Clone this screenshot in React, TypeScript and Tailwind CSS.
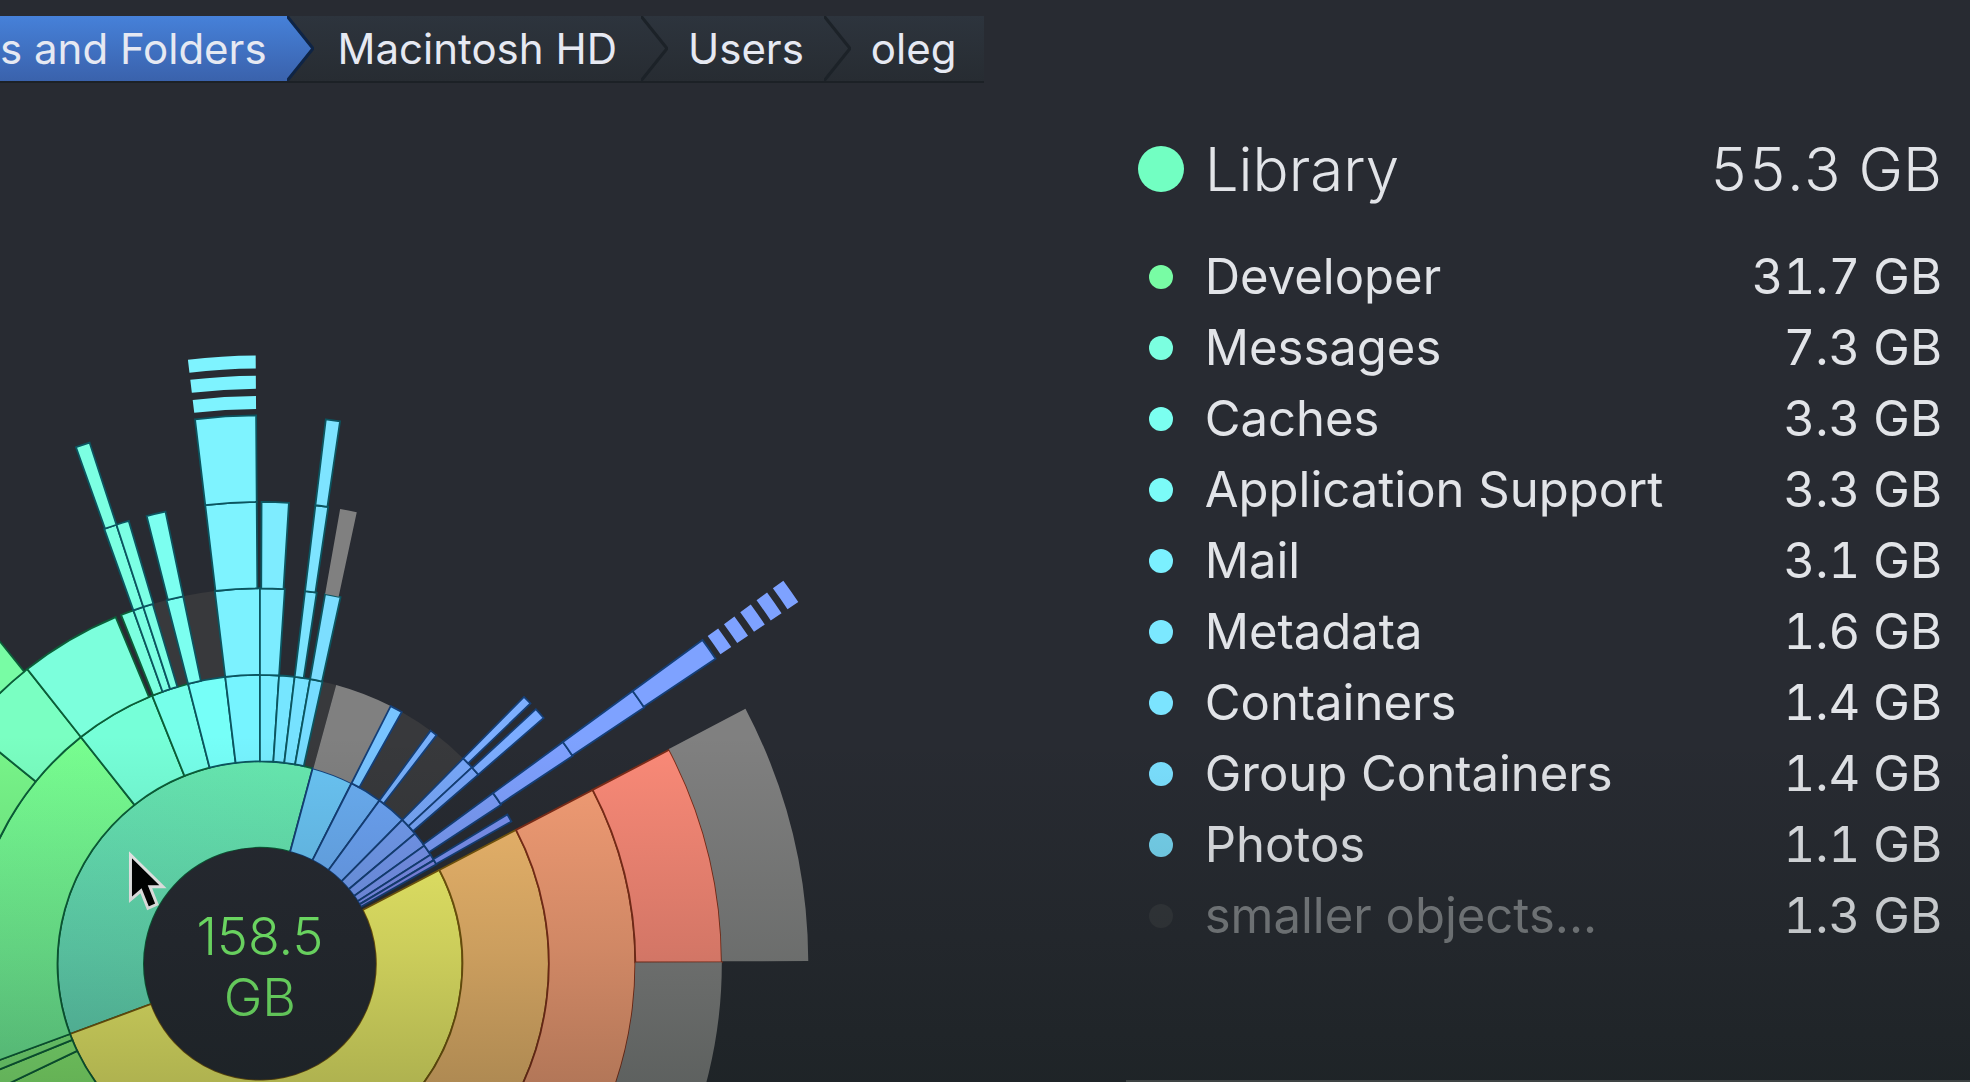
import React, { useState } from 'react';
import clsx from 'clsx';

type Seg = {
  ring: number;
  from: number;
  to: number;
  fill: string;
};

const CRUMBS = [
  { label: 's and Folders', pad: 'pr-5' },
  { label: 'Macintosh HD', pad: 'px-6' },
  { label: 'Users', pad: 'px-5' },
  { label: 'oleg', pad: 'pr-7 pl-5' },
];

const FOLDERS = [
  { name: 'Developer', size: '31.7 GB', dot: 'bg-[#78fca4]' },
  { name: 'Messages', size: '7.3 GB', dot: 'bg-[#7bffe0]' },
  { name: 'Caches', size: '3.3 GB', dot: 'bg-[#7bfff0]' },
  { name: 'Application Support', size: '3.3 GB', dot: 'bg-[#7bfbf8]' },
  { name: 'Mail', size: '3.1 GB', dot: 'bg-[#7bf0ff]' },
  { name: 'Metadata', size: '1.6 GB', dot: 'bg-[#7be8ff]' },
  { name: 'Containers', size: '1.4 GB', dot: 'bg-[#7be4ff]' },
  { name: 'Group Containers', size: '1.4 GB', dot: 'bg-[#7be0ff]' },
  { name: 'Photos', size: '1.1 GB', dot: 'bg-[#78d6f2]' },
];

const CX = 260;
const CY = 881;
const RADII = [116, 202.5, 289, 375.5, 462, 548.5];

const GRAY = '#808080';
const DIM = '#38393c';

// angles are degrees clockwise from twelve o'clock
const SEGMENTS: Seg[] = [
  // dimmed "smaller objects" filler
  { ring: 1, from: 12.5, to: 15.3, fill: DIM },
  { ring: 1, from: 29.4, to: 44.7, fill: DIM },
  { ring: 2, from: -16.6, to: -6.9, fill: DIM },

  { ring: 0, from: -110.3, to: 15.1, fill: 'url(#library)' },
  { ring: 0, from: 15.1, to: 26.9, fill: '#6ac4f4' },
  { ring: 0, from: 26.9, to: 36.2, fill: '#6aadf2' },
  { ring: 0, from: 36.2, to: 44.7, fill: '#6ca3f4' },
  { ring: 0, from: 44.7, to: 50, fill: '#739cf0' },
  { ring: 0, from: 50, to: 54.3, fill: '#7598f0' },
  { ring: 0, from: 54.3, to: 57.4, fill: '#7894ee' },
  { ring: 0, from: 57.4, to: 59.2, fill: '#7c8eec' },
  { ring: 0, from: 59.2, to: 60.6, fill: '#8088e8' },
  { ring: 0, from: 62.4, to: 249.7, fill: '#f1f16a' },

  { ring: 1, from: 200, to: 244.5, fill: '#8af072' },
  { ring: 1, from: 244.5, to: 247.9, fill: '#88f078' },
  { ring: 1, from: 247.9, to: 249.7, fill: '#7eec7c' },
  { ring: 1, from: -110.3, to: -38.3, fill: 'url(#developer)' },
  { ring: 1, from: -38.3, to: -21.9, fill: '#76ffd8' },
  { ring: 1, from: -21.9, to: -14.4, fill: '#76ffea' },
  { ring: 1, from: -14.4, to: -6.9, fill: '#76fff8' },
  { ring: 1, from: -6.9, to: 0, fill: '#76f4ff' },
  { ring: 1, from: 0, to: 3.8, fill: '#76ecff' },
  { ring: 1, from: 3.8, to: 6.9, fill: '#76e6ff' },
  { ring: 1, from: 6.9, to: 10, fill: '#76e2ff' },
  { ring: 1, from: 10, to: 12.5, fill: '#76dcff' },
  { ring: 1, from: 15.3, to: 26.9, fill: GRAY },
  { ring: 1, from: 26.9, to: 29.4, fill: '#78c4ff' },
  { ring: 1, from: 36.2, to: 37.7, fill: '#78b0fc' },
  { ring: 1, from: 44.7, to: 47.2, fill: '#78a8fa' },
  { ring: 1, from: 47.2, to: 49.1, fill: '#78a6fa' },
  { ring: 1, from: 53.8, to: 56.6, fill: '#7b9cf8' },
  { ring: 1, from: 58.9, to: 60.5, fill: '#7c92f2' },
  { ring: 1, from: 62.4, to: 200, fill: '#f1b96e' },

  { ring: 2, from: -110.3, to: -50.9, fill: '#78f68a' },
  { ring: 2, from: -50.9, to: -38.3, fill: '#7affc2' },
  { ring: 2, from: -38.3, to: -22.6, fill: '#7cffdc' },
  { ring: 2, from: -21.7, to: -19.7, fill: '#7cffe0' },
  { ring: 2, from: -19.7, to: -18.1, fill: '#7cffe2' },
  { ring: 2, from: -18.1, to: -16.6, fill: '#7cffe4' },
  { ring: 2, from: -14.4, to: -11.8, fill: '#7cfff0' },
  { ring: 2, from: -6.9, to: 0, fill: '#7cf2ff' },
  { ring: 2, from: 0, to: 3.8, fill: '#7cecff' },
  { ring: 2, from: 6.9, to: 8.7, fill: '#7ce4ff' },
  { ring: 2, from: 10, to: 12.4, fill: '#7cdeff' },
  { ring: 2, from: 44.7, to: 46.1, fill: '#7caeff' },
  { ring: 2, from: 47.3, to: 49.1, fill: '#7cacff' },
  { ring: 2, from: 53.8, to: 56.4, fill: '#7ea0ff' },
  { ring: 2, from: 62.4, to: 200, fill: '#f69e76' },

  { ring: 3, from: -75, to: -38.9, fill: '#78fca4' },
  { ring: 3, from: -19.7, to: -18.1, fill: '#7cffe2' },
  { ring: 3, from: -18.1, to: -16.5, fill: '#7cffe4' },
  { ring: 3, from: -14.2, to: -11.8, fill: '#7cfff0' },
  { ring: 3, from: -6.8, to: -0.4, fill: '#7ef3ff' },
  { ring: 3, from: 0.2, to: 3.6, fill: '#7eecff' },
  { ring: 3, from: 6.9, to: 8.5, fill: '#7ee4ff' },
  { ring: 3, from: 10, to: 12.1, fill: GRAY },
  { ring: 3, from: 53.8, to: 56.3, fill: '#7ea2ff' },
  { ring: 3, from: 62.4, to: 89.8, fill: '#fb8a78' },
  { ring: 3, from: 89.8, to: 200, fill: GRAY },

  { ring: 4, from: -19.6, to: -18.1, fill: '#7cffe2' },
  { ring: 4, from: -6.8, to: -0.4, fill: '#7ef3ff' },
  { ring: 4, from: 6.9, to: 8.4, fill: '#7ee4ff' },
  { ring: 4, from: 53.8, to: 56.2, fill: '#7ea2ff' },
  { ring: 4, from: 62.3, to: 89.7, fill: GRAY },
];

// collapsed levels, drawn as short dashes past the outer ring
const DASHES = [
  { from: -6.8, to: -0.4, count: 3, fill: '#7ef3ff' },
  { from: 53.8, to: 56.1, count: 5, fill: '#7ea2ff' },
];

function point(r: number, deg: number) {
  const a = (deg * Math.PI) / 180;
  return `${(CX + r * Math.sin(a)).toFixed(2)} ${(CY - r * Math.cos(a)).toFixed(2)}`;
}

function arc(r0: number, r1: number, from: number, to: number) {
  const large = to - from > 180 ? 1 : 0;
  return [
    `M${point(r0, from)}`,
    `L${point(r1, from)}`,
    `A${r1} ${r1} 0 ${large} 1 ${point(r1, to)}`,
    `L${point(r0, to)}`,
    `A${r0} ${r0} 0 ${large} 0 ${point(r0, from)}`,
    'Z',
  ].join('');
}

function strokeFor(seg: Seg) {
  if (seg.fill === GRAY || seg.fill === DIM) return 'none';
  if (seg.from >= 62 && seg.from < 200) return seg.ring > 1 ? '#7d2c18' : '#75560c';
  if (seg.from < -21 || seg.from >= 200) return '#0b5e38';
  if (seg.from < 15) return '#0b5560';
  return '#143f78';
}

function Sunburst() {
  return (
    <svg viewBox="0 0 1126 999" className="block w-full" role="img" aria-label="Disk usage of oleg">
      <defs>
        <linearGradient id="library" gradientUnits="userSpaceOnUse" x1="260" y1="680" x2="120" y2="960">
          <stop offset="0" stopColor="#67e8b0" />
          <stop offset="1" stopColor="#66dcba" />
        </linearGradient>
        <linearGradient id="developer" gradientUnits="userSpaceOnUse" x1="80" y1="650" x2="30" y2="970">
          <stop offset="0" stopColor="#78ff90" />
          <stop offset="1" stopColor="#72f29a" />
        </linearGradient>
      </defs>

      {SEGMENTS.map((seg, i) => (
        <path
          key={i}
          d={arc(RADII[seg.ring], RADII[seg.ring + 1], seg.from, seg.to)}
          fill={seg.fill}
          stroke={strokeFor(seg)}
          strokeWidth="1.8"
        />
      ))}

      {DASHES.map((d) =>
        Array.from({ length: d.count }, (_, i) => (
          <path
            key={`${d.from}-${i}`}
            d={arc(555 + i * 20.2, 568 + i * 20.2, d.from, d.to)}
            fill={d.fill}
          />
        ))
      )}

      <circle cx={CX} cy={CY} r="116" fill="#272a32" />
      <text textAnchor="middle" className="fill-[#7af46e] text-[52px] font-light">
        <tspan x={CX} y="872">158.5</tspan>
        <tspan x={CX} y="933">GB</tspan>
      </text>

      {/* pointer */}
      <path
        d="M130.500 772V817L141 808L148 825.500L157 821.500L150 804H163Z"
        fill="#000"
        stroke="#f4f4f4"
        strokeWidth="3"
      />
    </svg>
  );
}

function Chevron({ active }: { active: boolean }) {
  return (
    <svg viewBox="0 0 27 65" className="h-[65px] w-[27px] shrink-0" aria-hidden="true">
      {active && (
        <>
          <defs>
            <linearGradient id="crumb" x1="0" y1="0" x2="0" y2="1">
              <stop offset="0" stopColor="#4681d9" />
              <stop offset="1" stopColor="#3a62ac" />
            </linearGradient>
          </defs>
          <path d="M0 0L26 32.500L0 65Z" fill="url(#crumb)" />
        </>
      )}
      <path d="M0 0L26 32.500L0 65" fill="none" stroke={active ? '#0f2444' : '#1c2228'} strokeWidth="3" />
    </svg>
  );
}

export default function App() {
  const [active, setActive] = useState(0);

  return (
    <div className="relative flex min-h-screen flex-col overflow-hidden bg-[#282b32] font-['Inter','Liberation_Sans',sans-serif]">
      <header className="flex pt-4">
        <nav
          aria-label="Path"
          className="flex h-[67px] border-b-2 border-[#1c2126] bg-linear-to-b from-[#2d343d] to-[#272c32] text-[42px] text-[#e6e9f2]"
        >
          {CRUMBS.map((crumb, i) => (
            <React.Fragment key={crumb.label}>
              <a
                href="#"
                onClick={() => setActive(i)}
                className={clsx(
                  'flex h-[65px] items-center whitespace-nowrap',
                  crumb.pad,
                  i === active && 'bg-linear-to-b from-[#4681d9] to-[#3a62ac]'
                )}
              >
                {crumb.label}
              </a>
              {i < CRUMBS.length - 1 && <Chevron active={i === active} />}
            </React.Fragment>
          ))}
        </nav>
      </header>

      <main className="grid flex-1 grid-cols-[4fr_3fr]">
        <section className="min-w-0">
          <Sunburst />
        </section>

        <aside className="border-b-2 border-[#54575a] pt-[38px] pr-7">
          <table className="w-full text-[#e2e4e8]">
            <thead>
              <tr className="h-[120px] align-top text-[60px] leading-[96px]">
                <td className="w-[79px]">
                  <div className="ml-3 flex h-[96px] w-[46px] items-center justify-center">
                    <span className="size-[46px] rounded-full bg-[#72ffc2]" />
                  </div>
                </td>
                <th scope="col" className="text-left font-light">Library</th>
                <th scope="col" className="text-right font-light tabular-nums">55.3 GB</th>
              </tr>
            </thead>
            <tbody className="text-[49px] leading-[71px]">
              {FOLDERS.map((f) => (
                <tr key={f.name}>
                  <td>
                    <div className="ml-3 flex w-[46px] justify-center">
                      <span className={clsx('size-6 rounded-full', f.dot)} />
                    </div>
                  </td>
                  <th scope="row" className="text-left font-normal whitespace-nowrap">{f.name}</th>
                  <td className="text-right whitespace-nowrap tabular-nums">{f.size}</td>
                </tr>
              ))}
              <tr>
                <td>
                  <div className="ml-3 flex w-[46px] justify-center">
                    <span className="size-6 rounded-full bg-[#34373c]" />
                  </div>
                </td>
                <th scope="row" className="text-left font-normal whitespace-nowrap text-[#7c7f83]">smaller objects...</th>
                <td className="text-right whitespace-nowrap tabular-nums">1.3 GB</td>
              </tr>
            </tbody>
          </table>
        </aside>
      </main>

      {/* vignette along the bottom */}
      <div className="pointer-events-none absolute inset-0 bg-linear-to-b from-transparent from-68% via-[#06100a]/16 via-88% to-[#06120c]/28" />
    </div>
  );
}
